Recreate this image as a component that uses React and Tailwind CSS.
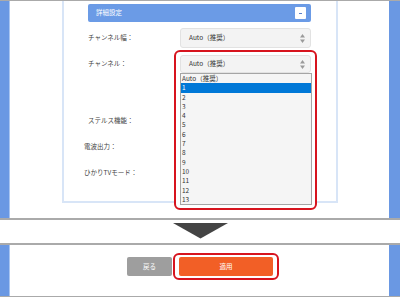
import React from "react";

const channels = ["1", "2", "3", "4", "5", "6", "7", "8", "9", "10", "11", "12", "13"];

function SelectArrows() {
  return (
    <svg width="5" height="9" viewBox="0 0 5 9" className="shrink-0">
      <polygon points="2.5,0 5,3.5 0,3.5" fill="#9a9a9a" />
      <polygon points="0,5.5 5,5.5 2.5,9" fill="#9a9a9a" />
    </svg>
  );
}

function FakeSelect({ h }) {
  return (
    <div
      className={`w-[131px] ${h} flex items-center justify-between pl-[8px] pr-[5px] bg-[#f3f3f3] border border-[#e2e2e2] rounded-[3px] text-[6.5px] text-[#333]`}
    >
      <span>Auto（推奨）</span>
      <SelectArrows />
    </div>
  );
}

export default function App() {
  return (
    <div className="w-[400px] h-[297px] bg-white flex flex-col overflow-hidden font-['Noto_Sans_CJK_JP','Noto_Sans',sans-serif]">
      {/* top screenshot */}
      <div className="h-[218px] flex border-t border-[#aaaaaa]">
        <div className="w-[10px] bg-[#6a98e3] border-r border-[#a9c5f1]" />
        <div className="flex-1 pl-[52px]">
          <div className="w-[276px] h-[202px] border-x-2 border-b-2 border-[#d8e5f7] pl-[24px] pt-[3px] text-[6.5px] text-[#444]">
            {/* header */}
            <div className="w-[223px] h-[18px] bg-[#6b9be6] rounded-[2px] flex items-center justify-between pl-[8px] pr-[5px] text-white">
              <span>詳細設定</span>
              <div className="w-[11px] h-[12px] bg-white rounded-[1px] flex items-center justify-center">
                <div className="w-[3px] h-[1px] bg-[#5a7fc8]" />
              </div>
            </div>

            {/* channel width */}
            <div className="mt-[6px] h-[20px] flex items-center">
              <div className="w-[92px]">チャンネル幅：</div>
              <FakeSelect h="h-[20px]" />
            </div>

            {/* channel with open list */}
            <div className="mt-[7px] h-[18px] flex items-center">
              <div className="w-[92px]">チャンネル：</div>
              <div className="relative">
                <div className="absolute -left-[6px] -top-[5px] w-[143px] h-[160px] border-2 border-[#d7141e] rounded-[6px] bg-white" />
                <div className="relative">
                  <FakeSelect h="h-[18px]" />
                </div>
                <div className="absolute left-0 top-[18px] w-[132px] h-[132px] border border-[#a5a5a5] bg-[#f5f5f5] flex flex-col text-[6.5px] text-[#333] z-10">
                  <div className="h-[9.3px] leading-[9.3px] pl-[1px]">Auto（推奨）</div>
                  {channels.map((c, i) => (
                    <div
                      key={c}
                      className={`h-[9.3px] leading-[9.3px] pl-[1px] ${i === 0 ? "bg-[#0078d7] text-white" : ""}`}
                    >
                      {c}
                    </div>
                  ))}
                </div>
              </div>
            </div>

            <div className="mt-[38px] h-[20px] flex items-center">
              <div className="w-[92px]">ステルス機能：</div>
            </div>
            <div className="mt-[6px] h-[20px] flex items-center">
              <div className="w-[92px] -ml-[4px]">電波出力：</div>
            </div>
            <div className="mt-[6px] h-[20px] flex items-center">
              <div className="w-[92px] -ml-[4px]">ひかりTVモード：</div>
            </div>
          </div>
        </div>
        <div className="w-[11px] bg-[#6a98e3]" />
      </div>

      <div className="h-[2px] bg-[#aaaaaa]" />

      {/* arrow */}
      <div className="h-[23px] flex justify-center pt-[3px]">
        <svg width="55" height="16" viewBox="0 0 55 16">
          <polygon points="0,0 55,0 27.5,15.5" fill="#444444" />
        </svg>
      </div>

      <div className="h-[2px] bg-[#aaaaaa]" />

      {/* bottom screenshot */}
      <div className="h-[52px] flex border-b border-[#aaaaaa]">
        <div className="w-[10px] bg-[#6a98e3] border-r border-[#a9c5f1]" />
        <div className="flex-1 flex justify-center pl-[1px] pt-[12px]">
          <div className="flex items-start gap-[7px] text-[6.5px] text-white">
            <div className="w-[45px] h-[19px] bg-[#9e9e9e] rounded-[2px] flex items-center justify-center">
              戻る
            </div>
            <div className="relative">
              <div className="absolute -left-[6px] -top-[4px] w-[106px] h-[27px] border-2 border-[#d7141e] rounded-[6px]" />
              <div className="relative w-[94px] h-[19px] bg-[#f25f26] rounded-[2px] flex items-center justify-center">
                適用
              </div>
            </div>
          </div>
        </div>
        <div className="w-[11px] bg-[#6a98e3]" />
      </div>
    </div>
  );
}
